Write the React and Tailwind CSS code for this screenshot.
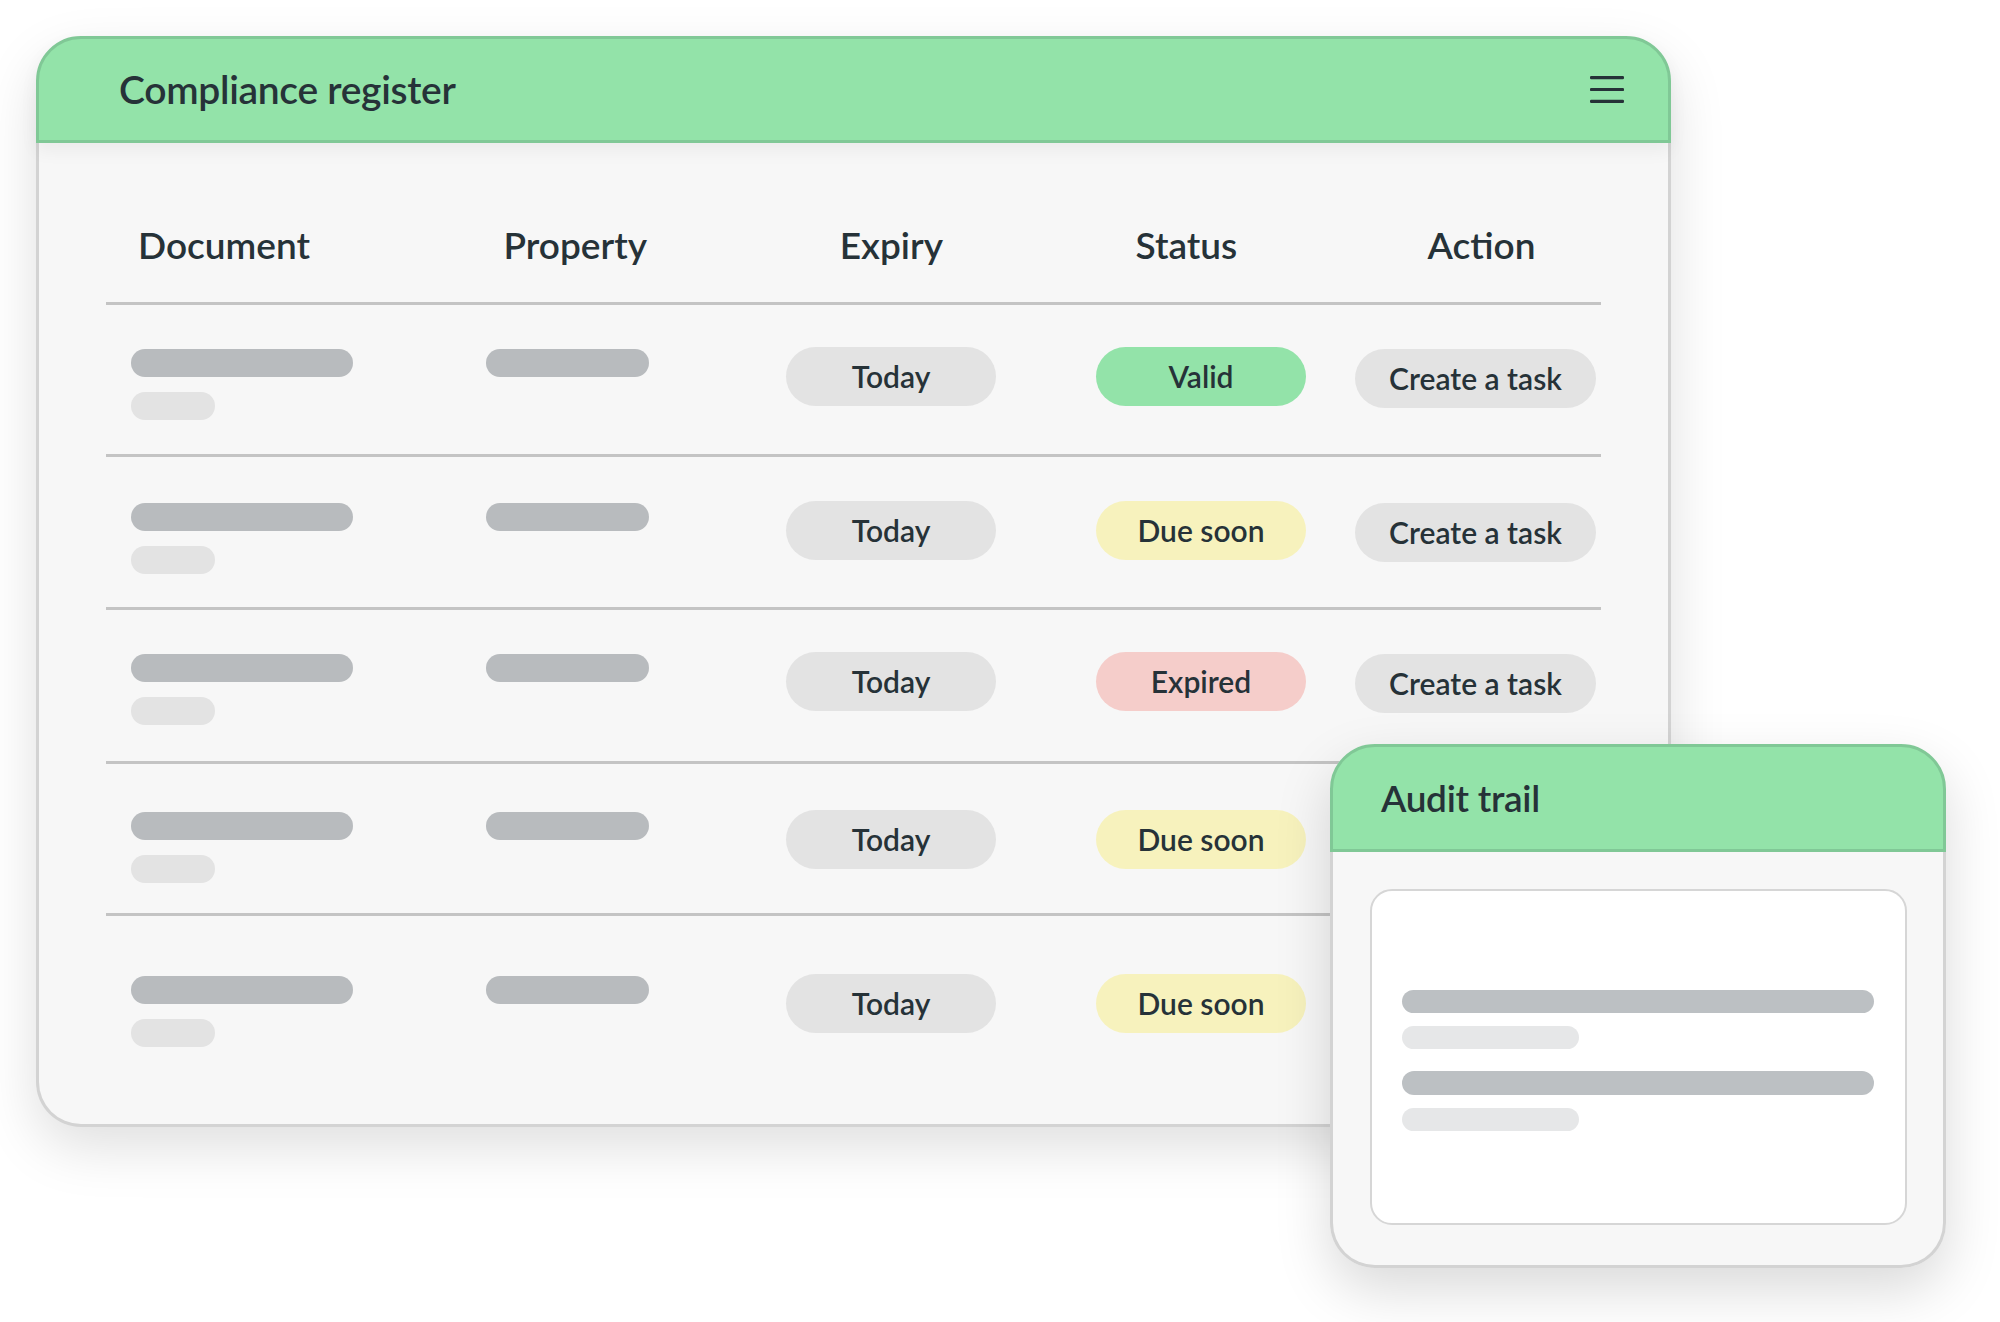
const rows = [
  { status: 'Valid', tone: 'bg-[#93e3a9]', h: 'h-[152px]', pt: 'pt-[42px]' },
  { status: 'Due soon', tone: 'bg-[#f7f2bd]', h: 'h-[153px]', pt: 'pt-[44px]' },
  { status: 'Expired', tone: 'bg-[#f5cdca]', h: 'h-[154px]', pt: 'pt-[42px]' },
  { status: 'Due soon', tone: 'bg-[#f7f2bd]', h: 'h-[152px]', pt: 'pt-[46px]' },
  { status: 'Due soon', tone: 'bg-[#f7f2bd]', h: 'h-[211px]', pt: 'pt-[58px]' },
];

function Pill({ children, className }) {
  return (
    <div
      className={`h-[59px] rounded-full flex items-center justify-center text-[30px] font-semibold text-[#263238] ${className}`}
    >
      {children}
    </div>
  );
}

function Row({ row }) {
  return (
    <div className={`flex items-start border-t-[3px] border-[#c4c4c4] ${row.h} ${row.pt}`}>
      <div className="w-[380px] pl-[25px] pt-[2px] flex flex-col gap-[15px]">
        <div className="w-[222px] h-[28px] rounded-full bg-[#b8bbbe]" />
        <div className="w-[84px] h-[28px] rounded-full bg-[#e3e3e3]" />
      </div>
      <div className="w-[300px] pt-[2px]">
        <div className="w-[163px] h-[28px] rounded-full bg-[#b8bbbe]" />
      </div>
      <div className="w-[310px]">
        <Pill className="w-[210px] bg-[#e3e3e3]">Today</Pill>
      </div>
      <div className="w-[259px]">
        <Pill className={`w-[210px] ${row.tone}`}>{row.status}</Pill>
      </div>
      <div className="pt-[2px]">
        <Pill className="w-[241px] bg-[#e3e3e3]">Create a task</Pill>
      </div>
    </div>
  );
}

export default function App() {
  return (
    <div
      className="relative w-[2000px] h-[1322px] bg-white overflow-hidden"
      style={{ fontFamily: 'Lato, "Open Sans", sans-serif' }}
    >
      <div className="pt-[36px] pl-[36px]">
        <div className="w-[1635px] h-[1089px] flex flex-col rounded-[45px] bg-[#f7f7f7] shadow-[0_22px_55px_rgba(0,0,0,0.13)]">
          <div className="relative z-10 h-[107px] shrink-0 flex items-center justify-between pl-[80px] pr-[44px] bg-[#93e3a9] border-[3px] border-[#80c896] rounded-t-[45px] shadow-[0_8px_18px_rgba(0,0,0,0.05)]">
            <h1 className="text-[39px] font-semibold text-[#263238] tracking-[-0.3px]">Compliance register</h1>
            <svg width="34" height="27" viewBox="0 0 34 27" className="text-[#263238]">
              <rect x="0" y="0" width="34" height="3.2" rx="1.2" fill="currentColor" />
              <rect x="0" y="11.9" width="34" height="3.2" rx="1.2" fill="currentColor" />
              <rect x="0" y="23.8" width="34" height="3.2" rx="1.2" fill="currentColor" />
            </svg>
          </div>
          <div className="flex-1 border-x-[3px] border-b-[3px] border-[#d3d3d3] rounded-b-[45px] px-[67px]">
            <div className="h-[159px] flex items-start pt-[80px] text-[37px] leading-[44px] font-semibold text-[#263238]">
              <div className="w-[351px] pl-[32px]">Document</div>
              <div className="w-[240px] text-center">Property</div>
              <div className="w-[240px] ml-[77px] text-center">Expiry</div>
              <div className="w-[240px] ml-[56px] text-center">Status</div>
              <div className="w-[240px] ml-[56px] text-center">Action</div>
            </div>
            {rows.map((row, i) => (
              <Row key={i} row={row} />
            ))}
          </div>
        </div>
      </div>

      <div className="absolute left-[1330px] top-[744px] w-[616px] h-[524px] flex flex-col rounded-[45px] bg-[#f7f7f7] shadow-[0_22px_55px_rgba(0,0,0,0.15)]">
        <div className="h-[108px] shrink-0 flex items-center pl-[48px] bg-[#93e3a9] border-[3px] border-[#80c896] rounded-t-[45px]">
          <h2 className="text-[37px] font-semibold text-[#263238] tracking-[-0.3px]">Audit trail</h2>
        </div>
        <div className="flex-1 border-x-[3px] border-b-[3px] border-[#d3d3d3] rounded-b-[45px] pt-[37px] pl-[37px] pr-[36px] pb-[40px]">
          <div className="h-full bg-white border-2 border-[#d6d6d6] rounded-[22px] pt-[99px] pl-[30px] pr-[31px]">
            <div className="h-[23px] rounded-full bg-[#bcc0c3]" />
            <div className="mt-[13px] w-[177px] h-[23px] rounded-full bg-[#e6e7e8]" />
            <div className="mt-[22px] h-[24px] rounded-full bg-[#bcc0c3]" />
            <div className="mt-[13px] w-[177px] h-[23px] rounded-full bg-[#e6e7e8]" />
          </div>
        </div>
      </div>
    </div>
  );
}
